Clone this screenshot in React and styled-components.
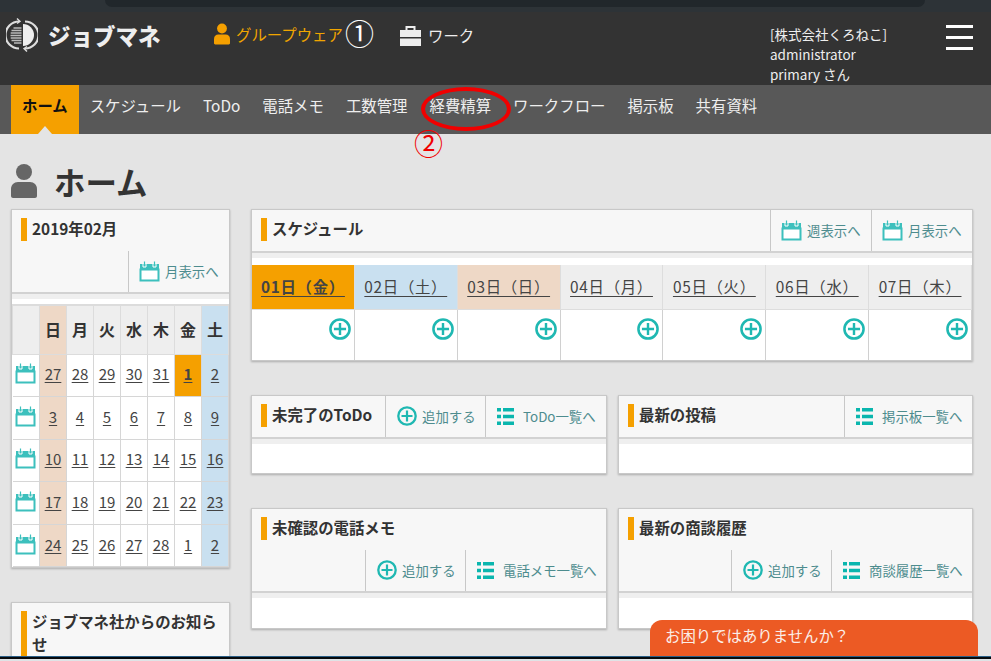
import React from "react";
import styled, { createGlobalStyle } from "styled-components";

const Global = createGlobalStyle`
  html, body { margin: 0; padding: 0; height: 661px; overflow: hidden; background: #e4e4e4; }
  body { font-family: "Noto Sans CJK JP", "Noto Sans", sans-serif; color: #333; }
  * { box-sizing: border-box; }
`;

const Page = styled.div`position: relative; width: 991px; height: 661px; overflow: hidden;`;
const BrowserStrip = styled.div`height: 12px; background: #2d3337; padding: 0 66px 0 105px;`;
const BrowserPill = styled.div`height: 7px; background: #21272b; border-radius: 0 0 9px 9px;`;

const Header = styled.header`
  height: 73px; background: #333; display: flex; align-items: flex-start; position: relative;
`;
const Logo = styled.div`display: flex; align-items: center; width: 214px; padding: 6px 0 0 6px; gap: 10px;`;
const LogoText = styled.span`font-size: 22.5px; font-weight: 900; color: #eee; line-height: 30px; white-space: nowrap; margin-top: -1px;`;
const TopLink = styled.div`
  display: flex; align-items: center; gap: ${p => p.$gap}px; font-size: 15.4px; line-height: 20px; padding-top: 11px;
  color: ${p => p.$color}; width: ${p => p.$w}px; white-space: nowrap;
`;
const UserBox = styled.div`font-size: 13.5px; line-height: 20px; color: #eee; width: 176px; padding-top: 12px; white-space: nowrap;`;
const Burger = styled.div`display: flex; flex-direction: column; gap: 8px; padding-top: 13px; width: 27px;`;
const BurgerBar = styled.span`display: block; height: 3px; background: #fff;`;

const Nav = styled.nav`height: 49px; background: #585858; display: flex; padding-left: 11px; align-items: stretch;`;
const NavItem = styled.div`
  position: relative; display: flex; align-items: center; padding: 0 11px 10px;
  font-size: 15.4px; color: ${p => p.$active ? "#111" : "#eee"}; font-weight: ${p => p.$active ? 700 : 400};
  background: ${p => p.$active ? "#f5a000" : "transparent"}; white-space: nowrap;
  ${p => p.$active && `
    &::after { content: ""; position: absolute; left: 27px; bottom: 0; border: 7px solid transparent; border-top: 0; border-bottom: 8px solid #e4e4e4; }
  `}
`;

const Main = styled.main`padding: 0 18px 0 11px;`;
const PageTitle = styled.h1`
  display: flex; align-items: center; gap: 17px; height: 75px; margin: 0; padding-top: 19px;
  font-size: 31.5px; font-weight: 700; color: #333; line-height: 40px;
`;
const Columns = styled.div`display: grid; grid-template-columns: 219px 722px; column-gap: 21px; align-items: start;`;
const Stack = styled.div`display: flex; flex-direction: column; gap: ${p => p.$gap}px;`;
const Panel = styled.section`background: #fff; border: 1px solid #c8c8c8; box-shadow: 0 1px 2px rgba(0,0,0,.25);`;
const PanelHead = styled.div`
  background: #f7f7f7; border-bottom: 2px solid #d2d2d2;
  display: flex; flex-wrap: ${p => p.$wrap ? "wrap" : "nowrap"};
`;
const Title = styled.h2`
  flex: ${p => p.$full ? "0 0 100%" : "1 1 auto"}; margin: 0; display: flex; align-items: flex-start; gap: 5px; padding: 8px 0 0 9px;
  font-size: 15.4px; font-weight: 700; line-height: 23px; color: #333; min-height: 41px;
`;
const TitleBar = styled.span`flex: none; width: 6px; height: ${p => p.$h || 23}px; background: #f5a000;`;
const TitleText = styled.span`margin-top: -1px;`;
const Actions = styled.div`display: flex; margin-left: auto;`;
const Action = styled.div`
  width: ${p => p.$w}px; height: 41px; border-left: 1px solid #c8c8c8; display: flex; align-items: center; gap: ${p => p.$gap || 5}px;
  padding: 0 0 1px ${p => p.$pl || 10}px; font-size: 13.4px; color: #4d8c8e; white-space: nowrap;
`;
const Filler = styled.div`height: ${p => p.$h}px; background: linear-gradient(#efefef 0 5px, #fff 5px);`;
const PanelBody = styled.div`height: ${p => p.$h}px; background: linear-gradient(#efefef 0 5px, #fff 5px);`;

const CalTable = styled.table`width: 217px; border-collapse: collapse; table-layout: fixed;`;
const CalHead = styled.th`
  height: 49px; font-size: 16px; font-weight: 700; color: #333; padding: 0 0 2px; border: 1px solid #dcdcdc; border-top: 2px solid #dcdcdc;
  background: ${p => p.$bg || "#eee"};
`;
const CalCell = styled.td`
  height: 42.6px; padding: 0 0 3px; text-align: center; font-size: 15px; color: #444; border: 1px solid #d6d6d6; text-decoration: underline;
  text-underline-offset: 2px; font-weight: ${p => p.$bold ? 700 : 400}; background: ${p => p.$bg || "#fff"};
`;
const IconCell = styled.td`padding: 2px 0 0; text-align: center; border: 1px solid #d6d6d6; border-left: 0;`;

const DayGrid = styled.div`display: grid; grid-template-columns: repeat(7, 1fr);`;
const DayHead = styled.div`
  height: 45px; display: flex; align-items: center; justify-content: center; padding-bottom: 3px; font-size: 15.4px; color: #444; text-decoration: underline;
  text-underline-offset: 3px; white-space: pre; letter-spacing: .7px; border-right: 1px solid #ddd; border-bottom: 1px solid #ddd;
  background: ${p => p.$bg || "#eee"}; font-weight: ${p => p.$bold ? 700 : 400};
`;
const DayCell = styled.div`
  height: 50px; display: flex; justify-content: flex-end; padding: 8px 3px 0 0; border-right: 1px solid #d0d0d0;
`;
const Row = styled.div`display: grid; grid-template-columns: 356px 355px; column-gap: 11px;`;

const Annot = styled.div`position: absolute; left: ${p => p.$x}px; top: ${p => p.$y}px; font-size: ${p => p.$s}px; line-height: 1; color: ${p => p.$c};`;
const Ring = styled.div`position: absolute; left: 421px; top: 87px; width: 90px; height: 44px; border: 4px solid #f00000; border-radius: 50%;`;
const Chat = styled.div`
  position: absolute; left: 650px; top: 620px; width: 328px; height: 36px; background: #ec5a24; border-radius: 12px 12px 0 0;
  color: #fbeee8; font-size: 15.4px; line-height: 30px; padding-left: 15px;
`;
const BottomStrip = styled.div`
  position: absolute; left: 0; right: 0; top: 656px; height: 5px; background: #dfe3e6; border-top: 1px solid #2b5f86;
  &::before { content: ""; display: block; height: 2px; background: #06090c; }
`;

const CalIcon = ({ s = 21 }) => (
  <svg width={s} height={s} viewBox="0 0 21 21" style={{ flex: "none" }}>
    <path d="M1 3h19v5H1z" fill="#3cc0bd" />
    <path d="M1.500 8.500h18v11h-18z" fill="#fff" stroke="#3cc0bd" strokeWidth="2" />
    <path d="M4 2v4h3V2M14 2v4h3V2" fill="none" stroke="#fff" strokeWidth="1" />
    <path d="M5.500 .5v4.500M15.500 .5v4.500" stroke="#3cc0bd" strokeWidth="1.200" />
  </svg>
);
const PlusIcon = ({ s = 20 }) => (
  <svg width={s} height={s} viewBox="0 0 20 20" style={{ flex: "none", display: "block" }}>
    <circle cx="10" cy="10" r="8.700" fill="none" stroke="#1fb8b2" strokeWidth="2.300" />
    <path d="M4.500 10h11M10 4.500v11" stroke="#1fb8b2" strokeWidth="2.200" />
  </svg>
);
const ListIcon = () => (
  <svg width="17" height="17" viewBox="0 0 17 17" style={{ flex: "none" }}>
    <path d="M0 0h4v3.400H0zM6 0h11v3.400H6zM0 6.800h4v3.400H0zM6 6.800h11v3.400H6zM0 13.600h4V17H0zM6 13.600h11V17H6z" fill="#0ab6ae" />
  </svg>
);
const PersonIcon = ({ w, h, c }) => (
  <svg width={w} height={h} viewBox="0 0 26 34" style={{ flex: "none" }}>
    <circle cx="13" cy="8" r="8" fill={c} />
    <path d="M0 25c0-4 3-7 7-7h12c4 0 7 3 7 7v7c0 1-1 2-2 2H2c-1 0-2-1-2-2z" fill={c} />
  </svg>
);
const CaseIcon = () => (
  <svg width="21" height="21" viewBox="0 0 21 21" style={{ flex: "none", marginTop: 2 }}>
    <path d="M6.500 5V2h8v3" fill="none" stroke="#eee" strokeWidth="2" />
    <path d="M0 5h21v7H0zM0 13.500h21V21H0z" fill="#eee" />
  </svg>
);
const LogoIcon = () => (
  <svg width="32" height="34" viewBox="0 0 32 34" style={{ flex: "none" }}>
    <path d="M19 3.500A13.500 13.500 0 0 1 19 30.500M13 30.500A13.500 13.500 0 0 1 13 3.500" fill="none" stroke="#ddd" strokeWidth="2.200" />
    <path d="M11 .5l3 3-3 2M21 33.500l-3-3 3-2" fill="none" stroke="#ddd" strokeWidth="1.400" />
    <path d="M17 6a11 11 0 0 1 0 22z" fill="#eee" />
    <path d="M5.500 12.500h10M4.700 15h10.800M4.500 17.500h11M4.700 20h10.800M5.500 22.500h10M7.500 10h8M8 25h7.500" stroke="#bbb" strokeWidth="1.300" />
  </svg>
);

const navItems = ["スケジュール", "ToDo", "電話メモ", "工数管理", "経費精算", "ワークフロー", "掲示板", "共有資料"];
const SUN = "#eed8c6", SAT = "#c9e0f0";
const weeks = [
  [27, 28, 29, 30, 31, 1, 2], [3, 4, 5, 6, 7, 8, 9], [10, 11, 12, 13, 14, 15, 16],
  [17, 18, 19, 20, 21, 22, 23], [24, 25, 26, 27, 28, 1, 2],
];
const dayHeads = ["日", "月", "火", "水", "木", "金", "土"];
const days = [
  ["01日（金）", "#f5a000", true], ["02日（土）", SAT], ["03日（日）", SUN], ["04日（月）"], ["05日（火）"], ["06日（水）"], ["07日（木）"],
];
const colBg = i => (i === 0 ? SUN : i === 6 ? SAT : undefined);

const AddAction = ({ w = 100 }) => (
  <Action $w={w} $pl={11} $gap={5}><PlusIcon />追加する</Action>
);
const ListAction = ({ w, label }) => (
  <Action $w={w} $pl={11} $gap={9}><ListIcon />{label}</Action>
);
const ViewAction = ({ w, label }) => (
  <Action $w={w}><CalIcon />{label}</Action>
);
const PanelTitle = ({ full, h, children }) => (
  <Title $full={full}><TitleBar $h={h} /><TitleText>{children}</TitleText></Title>
);

export default function App() {
  return (
    <Page>
      <Global />
      <BrowserStrip><BrowserPill /></BrowserStrip>
      <Header>
        <Logo><LogoIcon /><LogoText>ジョブマネ</LogoText></Logo>
        <TopLink $w={186} $gap={6} $color="#f0a500"><PersonIcon w={16} h={22} c="#f5a000" />グループウェア</TopLink>
        <TopLink $w={370} $gap={7} $color="#eee"><CaseIcon />ワーク</TopLink>
        <UserBox>[株式会社くろねこ]<br />administrator<br />primary さん</UserBox>
        <Burger><BurgerBar /><BurgerBar /><BurgerBar /></Burger>
      </Header>
      <Nav>
        <NavItem $active>ホーム</NavItem>
        {navItems.map(n => <NavItem key={n}>{n}</NavItem>)}
      </Nav>
      <Main>
        <PageTitle><PersonIcon w={26} h={34} c="#666" />ホーム</PageTitle>
        <Columns>
          <Stack $gap={34}>
            <Panel>
              <PanelHead $wrap>
                <PanelTitle full>2019年02月</PanelTitle>
                <Actions><ViewAction w={101} label="月表示へ" /></Actions>
              </PanelHead>
              <Filler $h={10} />
              <CalTable>
                <colgroup><col style={{ width: 27 }} /></colgroup>
                <thead>
                  <tr>
                    <CalHead />
                    {dayHeads.map((d, i) => <CalHead key={d} $bg={colBg(i)}>{d}</CalHead>)}
                  </tr>
                </thead>
                <tbody>
                  {weeks.map((w, wi) => (
                    <tr key={wi}>
                      <IconCell><CalIcon /></IconCell>
                      {w.map((d, i) => {
                        const today = wi === 0 && i === 5;
                        return <CalCell key={i} $bold={today} $bg={today ? "#f5a000" : colBg(i)}>{d}</CalCell>;
                      })}
                    </tr>
                  ))}
                </tbody>
              </CalTable>
            </Panel>
            <Panel>
              <PanelHead>
                <PanelTitle h={60}>ジョブマネ社からのお知らせ</PanelTitle>
              </PanelHead>
            </Panel>
          </Stack>
          <Stack $gap={34}>
            <Panel>
              <PanelHead>
                <PanelTitle>スケジュール</PanelTitle>
                <Actions>
                  <ViewAction w={101} label="週表示へ" />
                  <ViewAction w={101} label="月表示へ" />
                </Actions>
              </PanelHead>
              <Filler $h={12} />
              <DayGrid>
                {days.map(([l, bg, b]) => <DayHead key={l} $bg={bg} $bold={b}>{l}</DayHead>)}
                {days.map(([l]) => <DayCell key={l}><PlusIcon s={22} /></DayCell>)}
              </DayGrid>
            </Panel>
            <Row>
              <Panel>
                <PanelHead>
                  <PanelTitle>未完了のToDo</PanelTitle>
                  <Actions>
                    <AddAction />
                    <ListAction w={121} label="ToDo一覧へ" />
                  </Actions>
                </PanelHead>
                <PanelBody $h={34} />
              </Panel>
              <Panel>
                <PanelHead>
                  <PanelTitle>最新の投稿</PanelTitle>
                  <Actions><ListAction w={128} label="掲示板一覧へ" /></Actions>
                </PanelHead>
                <PanelBody $h={34} />
              </Panel>
            </Row>
            <Row>
              <Panel>
                <PanelHead $wrap>
                  <PanelTitle full>未確認の電話メモ</PanelTitle>
                  <Actions>
                    <AddAction />
                    <ListAction w={141} label="電話メモ一覧へ" />
                  </Actions>
                </PanelHead>
                <PanelBody $h={35} />
              </Panel>
              <Panel>
                <PanelHead $wrap>
                  <PanelTitle full>最新の商談履歴</PanelTitle>
                  <Actions>
                    <AddAction />
                    <ListAction w={141} label="商談履歴一覧へ" />
                  </Actions>
                </PanelHead>
                <PanelBody $h={35} />
              </Panel>
            </Row>
          </Stack>
        </Columns>
      </Main>
      <Annot $x={345} $y={18} $s={29} $c="#fff">①</Annot>
      <Annot $x={414} $y={128} $s={29} $c="#f00000">②</Annot>
      <Ring />
      <Chat>お困りではありませんか？</Chat>
      <BottomStrip />
    </Page>
  );
}
